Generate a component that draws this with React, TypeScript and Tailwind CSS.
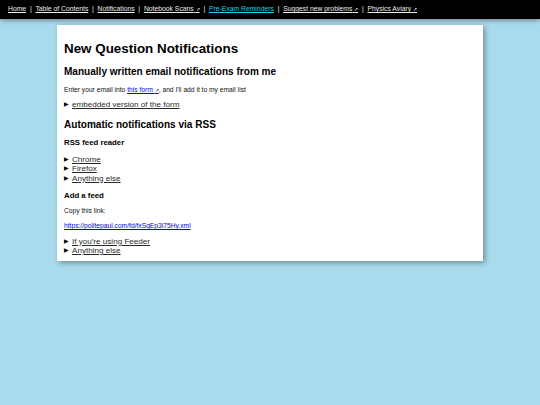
import React from "react";

const Arrow = () => <span className="text-[0.8em]">&#8599;</span>;

function Summary({ children }: { children: React.ReactNode }) {
  return (
    <div className="flex items-center leading-[9.4px] text-[8.1px] text-[#2a2a2a]">
      <span className="text-[6px] mr-[3px] text-black">&#9654;</span>
      <span className="underline">{children}</span>
    </div>
  );
}

export default function App() {
  const nav: { label: string; ext?: boolean; cyan?: boolean }[] = [
    { label: "Home" },
    { label: "Table of Contents" },
    { label: "Notifications" },
    { label: "Notebook Scans", ext: true },
    { label: "Pre-Exam Reminders", cyan: true },
    { label: "Suggest new problems", ext: true },
    { label: "Physics Aviary", ext: true },
  ];
  return (
    <div
      className="min-h-[405px] bg-[#a9dbec] text-black"
      style={{ fontFamily: '"Liberation Sans", Arial, sans-serif' }}
    >
      <div className="h-[19px] bg-black flex items-center px-[8px] text-[6.8px] text-[#ececec] shadow-[0_1px_5px_rgba(0,0,0,0.45)] relative z-10">
        {nav.map((n, i) => (
          <React.Fragment key={n.label}>
            {i > 0 && <span className="mx-[3.75px]">|</span>}
            <span className={"underline " + (n.cyan ? "text-[#1fd0dc]" : "")}>
              {n.label}
              {n.ext && (
                <>
                  {" "}
                  <Arrow />
                </>
              )}
            </span>
          </React.Fragment>
        ))}
      </div>
      <div className="ml-[57px] mt-[6px] w-[426px] bg-white shadow-[2px_2px_5px_rgba(0,0,0,0.35)] px-[7px] pt-[16px] pb-[5.5px]">
        <h1 className="text-[13.4px] font-bold leading-[15.5px]">New Question Notifications</h1>
        <h2 className="mt-[9px] text-[10.05px] font-bold leading-[11.5px]">
          Manually written email notifications from me
        </h2>
        <p className="mt-[9px] text-[6.7px] leading-[8px] text-[#111]">
          Enter your email into{" "}
          <span className="text-[#0000ee] underline">
            this form <Arrow />
          </span>
          , and I'll add it to my email list
        </p>
        <div className="mt-[6.4px]">
          <Summary>embedded version of the form</Summary>
        </div>
        <h2 className="mt-[9.5px] text-[10.05px] font-bold leading-[11.5px]">
          Automatic notifications via RSS
        </h2>
        <h3 className="mt-[7px] text-[7.8px] font-bold leading-[9px]">RSS feed reader</h3>
        <div className="mt-[8px]">
          <Summary>Chrome</Summary>
          <Summary>Firefox</Summary>
          <Summary>Anything else</Summary>
        </div>
        <h3 className="mt-[7.5px] text-[7.8px] font-bold leading-[9px]">Add a feed</h3>
        <p className="mt-[7.5px] text-[6.7px] leading-[8px] text-[#111]">Copy this link:</p>
        <p className="mt-[7px] text-[6.7px] leading-[8px]">
          <span className="text-[#0000ee] underline">https://politepaul.com/fd/fxSgEp3l75Hy.xml</span>
        </p>
        <div className="mt-[6.6px]">
          <Summary>If you're using Feeder</Summary>
          <Summary>Anything else</Summary>
        </div>
      </div>
    </div>
  );
}
